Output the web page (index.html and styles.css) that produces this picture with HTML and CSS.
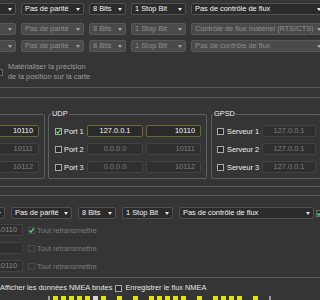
FILE: index.html
```html
<!DOCTYPE html>
<html>
    <head>
        <meta charset="utf-8">
        <meta name="viewport" content="width=device-width, initial-scale=1.0">
        <title>Réglages GPS</title>
        <link rel="stylesheet" href="styles.css">
    </head>
    <body>
        <div class="page">
            <div class="serial">
                <div class="combo-row">
                    <div class="combo lead"><span></span><span class="arrow"></span></div>
                    <div class="combo parity"><span>Pas de parité</span><span class="arrow"></span></div>
                    <div class="combo bits"><span>8 Bits</span><span class="arrow"></span></div>
                    <div class="combo stop"><span>1 Stop Bit</span><span class="arrow"></span></div>
                    <div class="combo flow"><span>Pas de contrôle de flux</span><span class="arrow"></span></div>
                </div>
                <div class="combo-row off second">
                    <div class="combo lead"><span></span><span class="arrow"></span></div>
                    <div class="combo parity"><span>Pas de parité</span><span class="arrow"></span></div>
                    <div class="combo bits"><span>8 Bits</span><span class="arrow"></span></div>
                    <div class="combo stop"><span>1 Stop Bit</span><span class="arrow"></span></div>
                    <div class="combo flow"><span>Contrôle de flux matériel (RTS/CTS)</span><span class="arrow"></span></div>
                </div>
                <div class="combo-row off third">
                    <div class="combo lead"><span></span><span class="arrow"></span></div>
                    <div class="combo parity"><span>Pas de parité</span><span class="arrow"></span></div>
                    <div class="combo bits"><span>8 Bits</span><span class="arrow"></span></div>
                    <div class="combo stop"><span>1 Stop Bit</span><span class="arrow"></span></div>
                    <div class="combo flow"><span>Pas de contrôle de flux</span><span class="arrow"></span></div>
                </div>
                <div class="option">
                    <span class="box dim"></span>
                    <span class="option-text">Matérialiser la précision<br>de la position sur la carte</span>
                </div>
            </div>

            <div class="divider"></div>

            <div class="network">
                <div class="groups">
                    <fieldset class="group tcp">
                        <legend>&nbsp;</legend>
                        <div class="rows">
                            <div class="row"><span class="field port on">10110</span></div>
                            <div class="row"><span class="field port">10111</span></div>
                            <div class="row"><span class="field port">10112</span></div>
                        </div>
                    </fieldset>
                    <fieldset class="group udp">
                        <legend>UDP</legend>
                        <div class="rows">
                            <div class="row">
                                <span class="box"><svg viewBox="0 0 7 7"><path d="M1.4 3.5 L2.9 5.1 L5.8 1.4" fill="none" stroke="#5ad25a" stroke-width="1.4"/></svg></span>
                                <span class="label">Port 1</span>
                                <span class="field ip on">127.0.0.1</span>
                                <span class="field port on">10110</span>
                            </div>
                            <div class="row">
                                <span class="box"></span>
                                <span class="label">Port 2</span>
                                <span class="field ip">0.0.0.0</span>
                                <span class="field port">10111</span>
                            </div>
                            <div class="row">
                                <span class="box"></span>
                                <span class="label">Port 3</span>
                                <span class="field ip">0.0.0.0</span>
                                <span class="field port">10112</span>
                            </div>
                        </div>
                    </fieldset>
                    <fieldset class="group gpsd">
                        <legend>GPSD</legend>
                        <div class="rows">
                            <div class="row">
                                <span class="box"></span>
                                <span class="label">Serveur 1</span>
                                <span class="field ip">127.0.0.1</span>
                            </div>
                            <div class="row">
                                <span class="box"></span>
                                <span class="label">Serveur 2</span>
                                <span class="field ip">127.0.0.1</span>
                            </div>
                            <div class="row">
                                <span class="box"></span>
                                <span class="label">Serveur 3</span>
                                <span class="field ip">127.0.0.1</span>
                            </div>
                        </div>
                    </fieldset>
                </div>
            </div>

            <div class="forward">
                <div class="combo-row out">
                    <div class="combo lead"><span></span><span class="arrow"></span></div>
                    <div class="combo parity"><span>Pas de parité</span><span class="arrow"></span></div>
                    <div class="combo bits"><span>8 Bits</span><span class="arrow"></span></div>
                    <div class="combo stop"><span>1 Stop Bit</span><span class="arrow"></span></div>
                    <div class="combo flow"><span>Pas de contrôle de flux</span><span class="arrow"></span></div>
                    <span class="box"><svg viewBox="0 0 7 7"><path d="M1.4 3.5 L2.9 5.1 L5.8 1.4" fill="none" stroke="#5ad25a" stroke-width="1.4"/></svg></span>
                </div>
                <div class="fwd-rows">
                    <div class="fwd-row">
                        <span class="field port">10110</span>
                        <span class="box faint"><svg viewBox="0 0 7 7"><path d="M1.4 3.5 L2.9 5.1 L5.8 1.4" fill="none" stroke="#5ad25a" stroke-width="1.4"/></svg></span>
                        <span class="fwd-text">Tout retransmettre</span>
                    </div>
                    <div class="fwd-row">
                        <span class="field port"></span>
                        <span class="box faint"></span>
                        <span class="fwd-text">Tout retransmettre</span>
                    </div>
                    <div class="fwd-row">
                        <span class="field port">10110</span>
                        <span class="box faint"></span>
                        <span class="fwd-text">Tout retransmettre</span>
                    </div>
                </div>
            </div>

            <div class="footer">
                <span>Afficher les données NMEA brutes</span>
                <span class="box"></span>
                <span class="save">Enregistrer le flux NMEA</span>
            </div>

            <div class="sats">
                <span class="bar edge"></span>
                <span class="bar"></span><span class="bar"></span><span class="bar"></span>
                <span class="bar"></span><span class="bar"></span><span class="bar pale"></span>
                <span class="bar"></span><span class="bar gap"></span><span class="bar"></span>
                <span class="bar gap"></span><span class="bar"></span><span class="bar gap"></span>
                <span class="bar"></span><span class="bar"></span><span class="bar"></span>
                <span class="bar"></span><span class="bar"></span><span class="bar gap"></span>
                <span class="bar"></span><span class="bar gap"></span><span class="bar"></span>
                <span class="bar"></span><span class="bar"></span><span class="bar"></span>
                <span class="bar gap"></span><span class="bar"></span><span class="bar gap"></span>
                <span class="bar edge"></span>
            </div>
        </div>
    </body>
</html>
```

FILE: styles.css
```css
body {
    margin: 0;
    background: #353535;
    font-family: "Liberation Sans", Arial, sans-serif;
    font-size: 7.4px;
    color: #ececec;
}
.page {
    width: 320px;
    height: 300px;
    overflow: hidden;
}
.serial {
    padding-top: 3px;
}
.combo-row {
    display: flex;
    gap: 5px;
    margin-left: -40px;
}
.combo-row.second {
    margin-top: 8px;
}
.combo-row.third {
    margin-top: 5px;
}
.combo {
    box-sizing: border-box;
    flex: none;
    height: 12px;
    display: flex;
    align-items: center;
    justify-content: space-between;
    padding: 0 3px;
    border: 1px solid #515151;
    border-radius: 2px;
    background: #2b2b2b;
    color: #f4f4f4;
    line-height: 10px;
    white-space: nowrap;
    overflow: hidden;
}
.arrow {
    flex: none;
    width: 0;
    height: 0;
    margin-left: 3px;
    border-left: 2.5px solid transparent;
    border-right: 2.5px solid transparent;
    border-top: 3px solid #e8e8e8;
}
.lead { width: 56px; }
.parity { width: 63px; }
.bits { width: 37px; }
.stop { width: 55px; }
.flow { width: 134px; }
.off .combo {
    background: #4a4a4a;
    border-color: #585858;
    color: #8e8e8e;
}
.off .arrow {
    border-top-color: #a4a4a4;
}
.box {
    box-sizing: border-box;
    flex: none;
    width: 7px;
    height: 7px;
    border: 1px solid #a9a9a9;
    background: #2a2a2a;
}
.box svg {
    display: block;
    width: 7px;
    height: 7px;
    margin: -1px;
}
.box.dim {
    border-color: #6a6a6a;
}
.box.faint {
    border-color: #4a4a4a;
    background: transparent;
}
.option {
    display: flex;
    align-items: center;
    margin: 10px 0 0 -4px;
}
.option-text {
    margin-left: 5px;
    line-height: 10px;
    color: #9d9d9d;
}
.divider {
    height: 1px;
    margin-top: 5px;
    background: #5b5b5b;
}
.network {
    margin-top: 9px;
    padding: 11px 0 7px;
    border-top: 1px solid #5b5b5b;
    border-bottom: 1px solid #5b5b5b;
}
.groups {
    display: flex;
    gap: 3px;
    margin-left: -55px;
}
.group {
    box-sizing: border-box;
    flex: none;
    min-width: 0;
    margin: 0;
    padding: 6px 5px 5px 6px;
    border: 1px solid #5f5f5f;
    border-radius: 2px;
}
legend {
    margin-left: -4px;
    padding: 0 1px;
    line-height: 10px;
    color: #eeeeee;
}
.tcp {
    width: 100px;
}
.udp {
    width: 159px;
}
.gpsd {
    width: 110px;
    margin-left: 1px;
    padding-left: 5px;
    padding-right: 4px;
}
.rows {
    display: flex;
    flex-direction: column;
    gap: 6px;
}
.row {
    display: flex;
    align-items: center;
    height: 12px;
}
.tcp .row {
    justify-content: flex-end;
}
.label {
    flex: none;
    color: #eeeeee;
    white-space: nowrap;
}
.udp .label {
    width: 21px;
    margin: 0 2px;
}
.gpsd .label {
    width: 33px;
    margin: 0 2px 0 3px;
}
.field {
    box-sizing: border-box;
    flex: none;
    height: 12px;
    padding: 0 5px;
    border: 1px solid #434343;
    border-radius: 2px;
    background: #2f2f2f;
    color: #7e7e7e;
    line-height: 10px;
    white-space: nowrap;
}
.field.on {
    border-color: #6b6830;
    background: #2a2a2a;
    color: #f6f6f6;
}
.ip {
    width: 56px;
    text-align: center;
}
.port {
    width: 55px;
    text-align: right;
}
.udp .port {
    margin-left: 3px;
}
.gpsd .ip {
    width: 54px;
}
.forward {
    margin-top: 8px;
    padding-top: 11px;
    border-top: 1px solid #5b5b5b;
}
.combo-row.out {
    gap: 6px;
    margin-left: -35px;
    align-items: center;
}
.out .lead { width: 40px; }
.out .parity { width: 61px; }
.out .bits { width: 38px; }
.out .stop { width: 51px; }
.out .flow { width: 135px; }
.out .box {
    margin-left: -4px;
    border-color: #6a6a6a;
}
.fwd-rows {
    display: flex;
    flex-direction: column;
    gap: 6px;
    margin: 5px 0 0 -30px;
}
.fwd-row {
    display: flex;
    align-items: center;
    height: 12px;
}
.fwd-row .port {
    width: 53px;
    color: #8a8a8a;
}
.fwd-row .box {
    margin-left: 5px;
}
.fwd-text {
    margin-left: 2px;
    color: #7b7b7b;
}
.footer {
    display: flex;
    align-items: center;
    margin-top: 5px;
    padding-top: 5px;
    border-top: 1px solid #5b5b5b;
    line-height: 10px;
    color: #e4e4e4;
    white-space: nowrap;
}
.footer .box {
    margin-left: 3px;
}
.save {
    margin-left: 3px;
}
.sats {
    display: flex;
    gap: 3px;
    margin-top: 3px;
    padding-left: 48px;
}
.bar {
    flex: none;
    width: 5px;
    height: 6px;
    background: #e2e21a;
}
.bar.gap {
    background: transparent;
}
.bar.pale {
    background: #d8d8d8;
}
.bar.edge {
    width: 2px;
    background: #9a9a9a;
}
```
